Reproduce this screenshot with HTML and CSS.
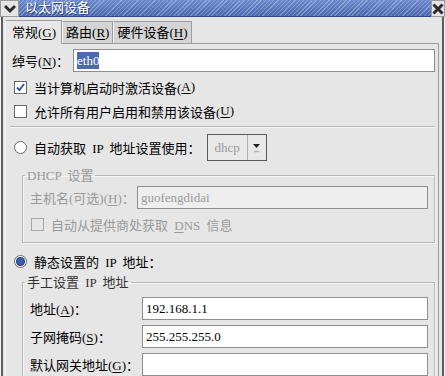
FILE: index.html
```html
<!DOCTYPE html>
<html lang="zh-CN">
<head>
    <meta charset="UTF-8">
    <title>以太网设备</title>
    <link rel="stylesheet" href="styles.css">
</head>
<body>
    <div class="titlebar">
        <div class="tb-btn menu">
            <svg width="12" height="10" viewBox="0 0 12 10"><path d="M1 2 L6 7 L11 2" fill="none" stroke="#2b2b2b" stroke-width="3"/></svg>
        </div>
        <div class="tb-title">以太网设备</div>
        <div class="tb-btn close">
            <svg width="12" height="12" viewBox="0 0 12 12"><path d="M1.5 1.5 L10.5 10.5 M10.5 1.5 L1.5 10.5" stroke="#2b2b2b" stroke-width="3"/></svg>
        </div>
    </div>
    <div class="frame">
        <div class="tabs">
            <div class="tab active">常规(<u>G</u>)</div>
            <div class="tab">路由(<u>R</u>)</div>
            <div class="tab">硬件设备(<u>H</u>)</div>
        </div>
        <div class="panel">
            <div class="field-row top">
                <span class="lbl nick">绰号(<u>N</u>)：</span>
                <div class="input"><span class="sel">eth0</span></div>
            </div>
            <div class="check-row first">
                <span class="check on">
                    <svg width="11" height="11" viewBox="0 0 11 11"><path d="M2 5.5 L4.5 8 L9 2" fill="none" stroke="#3558a8" stroke-width="2"/></svg>
                </span>
                当计算机启动时激活设备(<u>A</u>)
            </div>
            <div class="check-row">
                <span class="check"></span>
                允许所有用户启用和禁用该设备(<u>U</u>)
            </div>
            <hr class="sep">
            <div class="radio-row auto">
                <span class="radio"></span>
                <span class="wide">自动获取 IP 地址设置使用：</span>
                <div class="combo">
                    <span class="combo-text">dhcp</span>
                    <span class="combo-btn">
                        <svg width="9" height="10" viewBox="0 0 9 10"><path d="M1 1 H8 L4.5 5 Z" fill="#222"/><path d="M2 8.5 H7" stroke="#b4b4b4" stroke-width="1.5"/></svg>
                    </span>
                </div>
            </div>
            <fieldset class="group dim">
                <legend class="wide">DHCP 设置</legend>
                <div class="field-row">
                    <span class="lbl host">主机名(可选)(<u>H</u>)：</span>
                    <div class="input off">guofengdidai</div>
                </div>
                <div class="check-row dns">
                    <span class="check off"></span>
                    <span class="wide">自动从提供商处获取 <u>D</u>NS 信息</span>
                </div>
            </fieldset>
            <div class="radio-row static">
                <span class="radio on"></span>
                <span class="wide">静态设置的 IP 地址：</span>
            </div>
            <fieldset class="group manual">
                <legend class="wide">手工设置 IP 地址</legend>
                <div class="field-row">
                    <span class="lbl ip">地址(<u>A</u>)：</span>
                    <div class="input">192.168.1.1</div>
                </div>
                <div class="field-row">
                    <span class="lbl ip">子网掩码(<u>S</u>)：</span>
                    <div class="input">255.255.255.0</div>
                </div>
                <div class="field-row">
                    <span class="lbl ip">默认网关地址(<u>G</u>)：</span>
                    <div class="input"></div>
                </div>
            </fieldset>
        </div>
    </div>
</body>
</html>
```

FILE: styles.css
```css
body {
    margin: 0;
    width: 445px;
    height: 376px;
    overflow: hidden;
    background-color: #e6e6e6;
    font-family: "Liberation Serif", "Noto Sans CJK SC", serif;
    font-size: 13px;
    color: #000;
}

u {
    text-decoration: underline;
    text-underline-offset: 2px;
}

.wide {
    word-spacing: 3px;
}

/* title bar */

.titlebar {
    display: flex;
    height: 17px;
    background-color: #d8d8d8;
}

.tb-btn {
    display: flex;
    align-items: center;
    justify-content: center;
    background-color: #e4e4e4;
    border: 1px solid #9a9a9a;
    box-sizing: border-box;
}

.tb-btn.menu {
    width: 19px;
}

.tb-btn.close {
    width: 14px;
}

.tb-title {
    flex: 1;
    padding-left: 6px;
    line-height: 16px;
    color: #fff;
    text-shadow: 1px 1px 0 #2d4580;
    border-bottom: 1px solid #2e4a8c;
    background-color: #5573b8;
    background-image:
        repeating-linear-gradient(135deg, rgba(255, 255, 255, 0.28) 0 1px, transparent 1px 3px),
        linear-gradient(#6b88cc, #4a67ad);
}

/* window frame */

.frame {
    height: 359px;
    padding: 3px 6px 0 5px;
    box-shadow: inset 1px 0 #f4f4f4, inset 3px 0 #5c5c5c, inset -1px 0 #f4f4f4, inset -3px 0 #5c5c5c;
}

.tabs {
    display: flex;
    align-items: flex-end;
    height: 23px;
}

.tab {
    height: 22px;
    line-height: 22px;
    padding: 0 3px;
    box-sizing: border-box;
    background-color: #d4d4d4;
    border: 1px solid #9c9c9c;
    border-bottom: none;
    border-left-color: #f2f2f2;
}

.tab.active {
    position: relative;
    z-index: 1;
    height: 24px;
    margin-bottom: -1px;
    line-height: 23px;
    background-color: #e6e6e6;
    padding: 0 5px 0 6px;
}

.panel {
    border: 1px solid #9c9c9c;
    border-left-color: #f2f2f2;
    border-bottom: none;
    padding: 5px 3px 0 6px;
    height: 340px;
}

/* rows */

.field-row {
    display: flex;
    align-items: center;
    height: 23px;
}

.field-row + .field-row {
    margin-top: 5px;
}

.lbl {
    flex: none;
}

.lbl.nick {
    width: 61px;
}

.lbl.host {
    width: 107px;
}

.lbl.ip {
    width: 112px;
}

.input {
    flex: 1;
    height: 23px;
    box-sizing: border-box;
    border: 1px solid #8e8e8e;
    background-color: #fff;
    padding-left: 3px;
    line-height: 21px;
}

.input.off {
    background-color: #eeeeee;
    color: #9a9a9a;
}

.sel {
    background-color: #4b6aaf;
    color: #fff;
    padding: 1px 0;
}

.check-row,
.radio-row {
    display: flex;
    align-items: center;
    height: 24px;
}

.check-row.first {
    margin-top: 3px;
}

.check,
.radio {
    flex: none;
    width: 13px;
    height: 13px;
    box-sizing: border-box;
    margin: 0 7px 0 2px;
    display: flex;
    align-items: center;
    justify-content: center;
}

.check {
    border: 1px solid #6a6a6a;
    background-color: #fff;
}

.check.off {
    border-color: #a8a8a8;
    background-color: #e6e6e6;
}

.radio {
    border: 1px solid #6a6a6a;
    border-radius: 50%;
    background-color: #fff;
}

.radio.on::after {
    content: "";
    width: 7px;
    height: 7px;
    border-radius: 50%;
    background-color: #3a5eb0;
    box-shadow: 0 0 0 1px #22397a;
}

.sep {
    border: none;
    border-top: 1px solid #b8b8b8;
    border-bottom: 1px solid #f6f6f6;
    margin: 3px 0 0 -2px;
}

.radio-row.auto {
    height: 27px;
    margin-top: 6px;
}

.combo {
    display: flex;
    height: 27px;
    width: 60px;
    box-sizing: border-box;
    margin-left: 6px;
    border: 1px solid #5a5a5a;
    background-color: #e8e8e8;
}

.combo-text {
    width: 39px;
    text-align: center;
    line-height: 25px;
    color: #9a9a9a;
    border-right: 1px solid #b0b0b0;
}

.combo-btn {
    flex: 1;
    display: flex;
    align-items: center;
    justify-content: center;
}

/* group frames */

.group {
    margin: 7px 0 0 10px;
    padding: 0 6px 6px 7px;
    border: 1px solid #b8b8b8;
    box-shadow: inset 1px 1px 0 #f6f6f6, 1px 1px 0 #f6f6f6;
}

.group legend {
    margin-left: -5px;
    padding: 0 2px;
    line-height: 15px;
}

.group.dim {
    color: #9a9a9a;
}

.group.dim .field-row {
    margin-top: 3px;
}

.check-row.dns {
    margin-top: 3px;
}

.check-row.dns .check {
    margin-left: 1px;
}

.radio-row.static {
    margin-top: 6px;
}

.group.manual {
    margin-top: 2px;
    padding-bottom: 10px;
}

.group.manual legend {
    color: #333;
}

.group.manual .field-row:first-of-type {
    margin-top: 7px;
}
```
